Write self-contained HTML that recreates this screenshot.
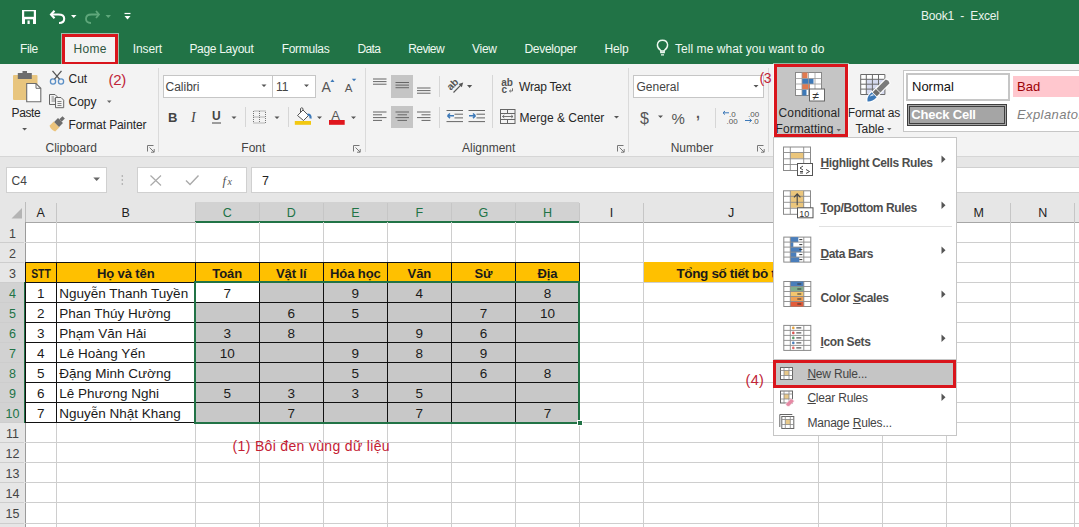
<!DOCTYPE html><html><head><meta charset="utf-8"><title>Excel</title><style>
*{margin:0;padding:0;box-sizing:border-box}
html,body{width:1079px;height:527px;overflow:hidden;background:#fff;font-family:"Liberation Sans",sans-serif}
.a{position:absolute}
.t{position:absolute;white-space:pre;line-height:1}
svg{position:absolute;overflow:visible}
</style></head><body>
<div class="a" style="left:0;top:0;width:1079px;height:64px;background:#217346"></div>
<svg style="left:0;top:0" width="140" height="32">
<rect x="22" y="10" width="14" height="14" fill="#fff"/>
<rect x="24.2" y="11.3" width="9.6" height="5.5" fill="#217346"/>
<rect x="25" y="19.3" width="8" height="4.7" fill="#217346"/>
<rect x="27.5" y="20.5" width="2.2" height="3.5" fill="#fff"/>
<path d="M54.5 10.8 L51 14.5 L54.5 18.2" fill="none" stroke="#fff" stroke-width="2.1"/>
<path d="M51.5 14.5 H58.5 Q64.2 14.5 64.2 18.8 Q64.2 23 59 23" fill="none" stroke="#fff" stroke-width="2.1"/>
<path d="M71 15 L76.5 15 L73.75 18 Z" fill="#fff"/>
<path d="M96 11 L99 14.5 L96 18" fill="none" stroke="#5fa77b" stroke-width="1.8"/>
<path d="M98.5 14.5 H91.5 Q86 14.5 86 18.8 Q86 23 91 23" fill="none" stroke="#5fa77b" stroke-width="1.8"/>
<path d="M105.5 15 L111 15 L108.25 18 Z" fill="#5fa77b"/>
<path d="M124.5 13.5 H130.5" stroke="#fff" stroke-width="1.2"/>
<path d="M124.5 16 L130.5 16 L127.5 19.5 Z" fill="#fff"/>
</svg>
<div class="t" style="left:921px;top:10px;font-size:12px;color:#eaf3ed;letter-spacing:-0.2px">Book1  -  Excel</div>
<div class="a" style="left:62px;top:34px;width:56px;height:30px;background:#f3f3f3"></div>
<div class="t" style="left:20px;top:43px;font-size:12px;color:#eef9f1;letter-spacing:-0.37px">File</div>
<div class="t" style="left:73.4px;top:43px;font-size:12px;color:#2f5640;letter-spacing:0.33px">Home</div>
<div class="t" style="left:132.8px;top:43px;font-size:12px;color:#eef9f1;letter-spacing:-0.12px">Insert</div>
<div class="t" style="left:189.4px;top:43px;font-size:12px;color:#eef9f1;letter-spacing:-0.30px">Page Layout</div>
<div class="t" style="left:281.7px;top:43px;font-size:12px;color:#eef9f1;letter-spacing:-0.29px">Formulas</div>
<div class="t" style="left:357.4px;top:43px;font-size:12px;color:#eef9f1;letter-spacing:-0.60px">Data</div>
<div class="t" style="left:408.3px;top:43px;font-size:12px;color:#eef9f1;letter-spacing:-0.62px">Review</div>
<div class="t" style="left:471.9px;top:43px;font-size:12px;color:#eef9f1;letter-spacing:-0.23px">View</div>
<div class="t" style="left:524.4px;top:43px;font-size:12px;color:#eef9f1;letter-spacing:-0.26px">Developer</div>
<div class="t" style="left:604.5px;top:43px;font-size:12px;color:#eef9f1;letter-spacing:-0.13px">Help</div>
<svg style="left:655px;top:39px" width="16" height="20"><path d="M5.8 13.5 V11.5 Q2.2 9 2.4 5.8 Q2.8 1.2 7.5 1.2 Q12.2 1.2 12.6 5.8 Q12.8 9 9.2 11.5 V13.5 Z" fill="none" stroke="#ecf8ef" stroke-width="1.4"/><path d="M6 15.8 H9 M5.8 12 H9.2" stroke="#ecf8ef" stroke-width="1.3"/></svg>
<div class="t" style="left:675px;top:43px;font-size:12px;color:#eef9f1;letter-spacing:0.05px">Tell me what you want to do</div>
<div class="a" style="left:62px;top:34px;width:56px;height:30.5px;border:3px solid #d9151c;box-shadow:0 0 0 1px rgba(255,255,255,0.55)"></div>
<div class="a" style="left:0;top:64px;width:1079px;height:92px;background:#f3f3f3"></div>
<div class="a" style="left:0;top:156px;width:1079px;height:1px;background:#d6d6d6"></div>
<div class="a" style="left:157.5px;top:68px;width:1px;height:84px;background:#dadada"></div>
<div class="a" style="left:364.5px;top:68px;width:1px;height:84px;background:#dadada"></div>
<div class="a" style="left:628px;top:68px;width:1px;height:84px;background:#dadada"></div>
<div class="a" style="left:768px;top:68px;width:1px;height:84px;background:#dadada"></div>
<div class="t" style="left:45.5px;top:142px;font-size:12px;color:#444">Clipboard</div>
<div class="t" style="left:241.3px;top:142px;font-size:12px;color:#444">Font</div>
<div class="t" style="left:462px;top:142px;font-size:12px;color:#444">Alignment</div>
<div class="t" style="left:670.7px;top:142px;font-size:12px;color:#444">Number</div>
<svg style="left:146.5px;top:145px" width="8" height="8"><path d="M0.5 6.5 V0.5 H6.5" fill="none" stroke="#777" stroke-width="1"/><path d="M2.5 2.5 L7 7 M4 7.2 H7.2 V4" fill="none" stroke="#777" stroke-width="1"/></svg>
<svg style="left:353px;top:145px" width="8" height="8"><path d="M0.5 6.5 V0.5 H6.5" fill="none" stroke="#777" stroke-width="1"/><path d="M2.5 2.5 L7 7 M4 7.2 H7.2 V4" fill="none" stroke="#777" stroke-width="1"/></svg>
<svg style="left:617px;top:145px" width="8" height="8"><path d="M0.5 6.5 V0.5 H6.5" fill="none" stroke="#777" stroke-width="1"/><path d="M2.5 2.5 L7 7 M4 7.2 H7.2 V4" fill="none" stroke="#777" stroke-width="1"/></svg>
<svg style="left:757px;top:145px" width="8" height="8"><path d="M0.5 6.5 V0.5 H6.5" fill="none" stroke="#777" stroke-width="1"/><path d="M2.5 2.5 L7 7 M4 7.2 H7.2 V4" fill="none" stroke="#777" stroke-width="1"/></svg>
<svg style="left:0;top:64px" width="160" height="70">
<rect x="13" y="11" width="24.5" height="25" rx="1" fill="#e8c57e"/>
<rect x="17.8" y="9" width="14" height="6" fill="#6d6d6d"/>
<rect x="22.5" y="7" width="4.5" height="3" fill="#6d6d6d"/>
<path d="M26.7 19.5 H36 L40.8 24.3 V37.8 H26.7 Z" fill="#fff" stroke="#6d6d6d" stroke-width="1.1"/>
<path d="M36 19.5 V24.3 H40.8" fill="none" stroke="#6d6d6d" stroke-width="1"/>
<circle cx="53" cy="17.5" r="2.6" fill="none" stroke="#5b8fc6" stroke-width="1.3"/>
<circle cx="61" cy="17.5" r="2.6" fill="none" stroke="#5b8fc6" stroke-width="1.3"/>
<path d="M54.5 15.2 L61.5 6.8 M59.5 15.2 L52.5 6.8" stroke="#555" stroke-width="1.3"/>
<path d="M49.5 30.5 H55 L57.5 33 V40.5 H49.5 Z" fill="#f3f3f3" stroke="#666" stroke-width="1"/>
<path d="M51.5 33 H54 M51.5 35 H55.5 M51.5 37 H55.5" stroke="#666" stroke-width="0.8"/>
<path d="M55.5 33.5 H61 L63.7 36.2 V43.7 H55.5 Z" fill="#f3f3f3" stroke="#666" stroke-width="1"/>
<path d="M57.5 37.5 H61.5 M57.5 39.5 H61.5 M57.5 41.5 H61.5" stroke="#666" stroke-width="0.8"/>
<g transform="rotate(-45 58 59)">
<path d="M50 55 H56 V63 H50 Q48 59 50 55 Z" fill="#ecc47c"/>
<rect x="56" y="55.5" width="5.5" height="7" fill="#6d6d6d"/>
<rect x="61.5" y="57.3" width="4.5" height="3.4" fill="#6d6d6d"/>
</g>
<path d="M22.2 64 H27 L24.6 66.5 Z" fill="#555"/>
<path d="M107 36.5 H111.5 L109.25 39 Z" fill="#666"/>
</svg>
<div class="t" style="left:11.6px;top:107px;font-size:12px;color:#262626;letter-spacing:-0.4px">Paste</div>
<div class="t" style="left:68.5px;top:73px;font-size:12px;color:#262626">Cut</div>
<div class="t" style="left:68.5px;top:96px;font-size:12px;color:#262626">Copy</div>
<div class="t" style="left:68.5px;top:119px;font-size:12px;color:#262626;letter-spacing:-0.1px">Format Painter</div>
<div class="t" style="left:108.5px;top:71.5px;font-size:15px;color:#c02438;letter-spacing:-0.3px">(2)</div>
<div class="a" style="left:162.5px;top:75px;width:110px;height:22.5px;background:#fff;border:1px solid #c6c6c6"></div>
<div class="a" style="left:271.5px;top:75px;width:44px;height:22.5px;background:#fff;border:1px solid #c6c6c6"></div>
<div class="t" style="left:165.5px;top:81px;font-size:12px;color:#444">Calibri</div>
<div class="t" style="left:276px;top:81px;font-size:12px;color:#444">11</div>
<svg style="left:150px;top:64px" width="220" height="70">
<path d="M111.5 20.5 H116.5 L114 23 Z M154 20.5 H159 L156.5 23 Z" fill="#555"/>
<text x="171.5" y="27.7" font-family="Liberation Sans" font-size="14" fill="#555">A</text>
<path d="M180.4 18 L184.5 18 L182.45 15.3 Z" fill="#3d79b8"/>
<text x="194.7" y="27.7" font-family="Liberation Sans" font-size="11.5" fill="#555">A</text>
<path d="M201.8 14.7 L206.3 14.7 L204.05 17.3 Z" fill="#3d79b8"/>
<text x="18" y="57.5" font-family="Liberation Sans" font-weight="bold" font-size="13" fill="#444">B</text>
<text x="41" y="57.5" font-family="Liberation Serif" font-style="italic" font-size="14" fill="#444">I</text>
<text x="62" y="56" font-family="Liberation Sans" font-weight="bold" font-size="12" fill="#444">U</text>
<path d="M62 59 H71" stroke="#444" stroke-width="1"/>
<path d="M81.5 52.5 H86.5 L84 55 Z M124.5 52.5 H129.5 L127 55 Z M167 52.5 H172 L169.5 55 Z M201 52.5 H206 L203.5 55 Z" fill="#555"/>
<path d="M103.5 47 V59 H115.5 V47 Z M109.5 47 V59 M103.5 53 H115.5" fill="none" stroke="#777" stroke-width="1" stroke-dasharray="1 1"/>
<rect x="144.8" y="57" width="16.2" height="3.8" fill="#f2c811"/>
<path d="M147.5 51.5 L153 46 L158.5 51.5 L153.5 56.5 Z" fill="#fff" stroke="#555" stroke-width="1"/>
<path d="M150.5 48 V44.5 Q151.8 43 153 44.5 V47" fill="none" stroke="#555" stroke-width="1"/>
<path d="M157.5 50.5 Q161 50.5 160.5 54.5" fill="none" stroke="#3d79b8" stroke-width="2.2"/>
<rect x="179" y="56" width="15.7" height="4.8" fill="#e0161d"/>
<text x="181.3" y="55.5" font-family="Liberation Sans" font-size="13" fill="#555">A</text>
</svg>
<div class="a" style="left:244.5px;top:107px;width:1px;height:20px;background:#d6d6d6"></div>
<div class="a" style="left:288px;top:107px;width:1px;height:20px;background:#d6d6d6"></div>
<div class="a" style="left:391px;top:75px;width:22px;height:22.5px;background:#c5c5c5"></div>
<div class="a" style="left:391px;top:105.5px;width:22px;height:22.5px;background:#c5c5c5"></div>
<svg style="left:0;top:0" width="700" height="160"><rect x="373" y="78.5" width="13.5" height="1" fill="#666"/><rect x="373" y="81.1" width="13.5" height="1" fill="#666"/><rect x="373" y="83.7" width="13.5" height="1" fill="#666"/><rect x="395.5" y="82.0" width="13.5" height="1" fill="#666"/><rect x="395.5" y="84.6" width="13.5" height="1" fill="#666"/><rect x="395.5" y="87.2" width="13.5" height="1" fill="#666"/><rect x="417" y="87.5" width="13.5" height="1" fill="#666"/><rect x="417" y="90.1" width="13.5" height="1" fill="#666"/><rect x="417" y="92.7" width="13.5" height="1" fill="#666"/><rect x="373" y="111.5" width="13.5" height="1" fill="#666"/><rect x="373" y="114.3" width="9" height="1" fill="#666"/><rect x="373" y="117.1" width="13.5" height="1" fill="#666"/><rect x="373" y="119.9" width="9" height="1" fill="#666"/><rect x="395.5" y="111.5" width="13.5" height="1" fill="#666"/><rect x="397.5" y="114.3" width="9.5" height="1" fill="#666"/><rect x="395.5" y="117.1" width="13.5" height="1" fill="#666"/><rect x="397.5" y="119.9" width="9.5" height="1" fill="#666"/><rect x="417" y="111.5" width="13.5" height="1" fill="#666"/><rect x="421.5" y="114.3" width="9" height="1" fill="#666"/><rect x="417" y="117.1" width="13.5" height="1" fill="#666"/><rect x="421.5" y="119.9" width="9" height="1" fill="#666"/><rect x="446.5" y="110.0" width="16.5" height="1" fill="#666"/><rect x="454.5" y="113.7" width="8.5" height="1" fill="#666"/><rect x="454.5" y="117.4" width="8.5" height="1" fill="#666"/><rect x="446.5" y="121.1" width="16.5" height="1" fill="#666"/><rect x="468.5" y="110.0" width="16.5" height="1" fill="#666"/><rect x="476.5" y="113.7" width="8.5" height="1" fill="#666"/><rect x="476.5" y="117.4" width="8.5" height="1" fill="#666"/><rect x="468.5" y="121.1" width="16.5" height="1" fill="#666"/>
<path d="M447.5 115.8 H454 M447.5 115.8 L450 113.5 M447.5 115.8 L450 118.1" fill="none" stroke="#3d79b8" stroke-width="1.5"/>
<path d="M469 115.8 H475.5 M475.5 115.8 L473 113.5 M475.5 115.8 L473 118.1" fill="none" stroke="#3d79b8" stroke-width="1.5"/>
<text x="446.5" y="88.5" font-family="Liberation Sans" font-weight="bold" font-size="10" fill="#555" transform="rotate(-45 451.5 84.5)">ab</text>
<path d="M453.5 92.5 L461.5 84.3" fill="none" stroke="#555" stroke-width="1.1"/>
<path d="M463.2 82.6 L458.6 84 L461.8 87.2 Z" fill="#555"/>
<path d="M467 85 H472.2 L469.6 88 Z" fill="#555"/>
<path d="M614 116 H619 L616.5 118.5 Z" fill="#555"/>
<text x="501.3" y="85.8" font-family="Liberation Sans" font-weight="bold" font-size="10" fill="#555">ab</text>
<text x="501.5" y="92.6" font-family="Liberation Sans" font-weight="bold" font-size="10" fill="#555">c</text>
<path d="M512.5 88.3 V91 H509.5 M510.8 89.8 L509.5 91 L510.8 92.2" fill="none" stroke="#666" stroke-width="0.9"/>
<rect x="500.5" y="109.5" width="14.5" height="14" fill="none" stroke="#666" stroke-width="1"/>
<path d="M500.5 113.5 H515 M500.5 119.5 H515 M507.5 109.5 V113.5 M507.5 119.5 V123.5" stroke="#666" stroke-width="1"/>
<path d="M502.5 116.5 H513 M502.5 116.5 L504.3 115 M502.5 116.5 L504.3 118 M513 116.5 L511.2 115 M513 116.5 L511.2 118" fill="none" stroke="#666" stroke-width="0.9"/>
</svg>
<div class="a" style="left:439px;top:75.5px;width:1px;height:21px;background:#d6d6d6"></div>
<div class="a" style="left:439px;top:107px;width:1px;height:21px;background:#d6d6d6"></div>
<div class="a" style="left:492.3px;top:74.5px;width:1px;height:53px;background:#d6d6d6"></div>
<div class="t" style="left:519px;top:81px;font-size:12px;color:#262626;letter-spacing:-0.2px">Wrap Text</div>
<div class="t" style="left:519.6px;top:112px;font-size:12px;color:#262626">Merge &amp; Center</div>
<div class="a" style="left:633px;top:75.3px;width:130.5px;height:22.5px;background:#fff;border:1px solid #c6c6c6"></div>
<div class="t" style="left:636.5px;top:81px;font-size:12px;color:#444">General</div>
<svg style="left:0;top:0" width="780" height="160">
<path d="M753.5 85 H758.5 L756 87.5 Z M658 115.5 H663 L660.5 118 Z" fill="#555"/>
<text x="640" y="124" font-family="Liberation Sans" font-size="16" fill="#555">$</text>
<text x="671.5" y="124" font-family="Liberation Sans" font-size="15" fill="#555">%</text>
<text x="696" y="118" font-family="Liberation Sans" font-weight="bold" font-size="14" fill="#555">,</text>
<text x="729" y="117" font-family="Liberation Sans" font-size="8" fill="#555">.0</text>
<text x="726.5" y="124" font-family="Liberation Sans" font-size="8" fill="#555">.00</text>
<path d="M723 112.8 H729 M723 112.8 L725 111 M723 112.8 L725 114.6" fill="none" stroke="#3d79b8" stroke-width="1"/>
<text x="748" y="117" font-family="Liberation Sans" font-size="8" fill="#555">.00</text>
<text x="752" y="124" font-family="Liberation Sans" font-size="8" fill="#555">.0</text>
<path d="M745 120.5 H751.5 M751.5 120.5 L749.5 118.7 M751.5 120.5 L749.5 122.3" fill="none" stroke="#3d79b8" stroke-width="1"/>
</svg>
<div class="a" style="left:715.3px;top:107.7px;width:1px;height:20px;background:#d6d6d6"></div>
<div class="t" style="left:759.5px;top:70.5px;font-size:14px;color:#c02438;letter-spacing:-0.5px">(3</div>
<svg style="left:0;top:0" width="1079" height="160">
<g transform="translate(860.2,74)">
<rect x="0.5" y="0.5" width="24.2" height="20" fill="#fff"/>
<rect x="6.1" y="5.3" width="18.6" height="15.2" fill="#d5d9ee"/>
<path d="M0.5 0.5 H24.7 V20.5 H0.5 Z M0.5 5.3 H24.7 M0.5 10.2 H24.7 M0.5 15.1 H24.7 M6.1 0.5 V20.5 M12.2 0.5 V20.5 M18.3 0.5 V20.5" stroke="#6a6a6a" stroke-width="1" fill="none"/>
</g>
<g transform="translate(867.5,101.5) rotate(-45)">
<path d="M0 0 Q2.5 -4 9.5 -3.6 L9.5 3.4 Q3 3.6 0 0 Z M10.3 -2.9 H14.8 V2.9 H10.3 Z M15.5 -2.7 H28.5 L29.5 0 L28.5 2.7 H15.5 Z" fill="#fff" stroke="#fff" stroke-width="2.2" stroke-linejoin="round"/>
<path d="M0 0 Q2.5 -4 9.5 -3.6 L9.5 3.4 Q3 3.6 0 0 Z" fill="#3d79b8"/>
<path d="M5 -2.2 Q7.5 -2.6 9 -1.5 L9 0.2 Q7 -0.8 5 -2.2 Z" fill="#ffffff" opacity="0.75"/>
<rect x="10.3" y="-2.9" width="4.5" height="5.8" fill="#6d6d6d"/>
<path d="M15.5 -2.7 H28.5 L29.5 0 L28.5 2.7 H15.5 Z" fill="#7b7b7b"/>
</g>
<path d="M887 128 H891.5 L889.25 130.5 Z" fill="#666"/>
</svg>
<div class="t" style="left:847.8px;top:107px;font-size:12px;color:#262626;letter-spacing:-0.2px">Format as</div>
<div class="t" style="left:855.5px;top:122.5px;font-size:12px;color:#262626">Table</div>
<div class="a" style="left:903px;top:70px;width:200px;height:62px;background:#fff;border:1px solid #c6c6c6"></div>
<div class="a" style="left:906px;top:73.3px;width:103.5px;height:27.5px;background:#fff;border:2px solid #c6c6c6"></div>
<div class="t" style="left:912px;top:79.5px;font-size:13px;color:#111">Normal</div>
<div class="a" style="left:1012.8px;top:76.2px;width:80px;height:21px;background:#ffc7ce"></div>
<div class="t" style="left:1017px;top:79.5px;font-size:13px;color:#9c0006">Bad</div>
<div class="a" style="left:907px;top:104px;width:99.6px;height:22px;background:#a5a5a5;border:1px solid #3f3f3f;box-shadow:inset 0 0 0 1px #a5a5a5, inset 0 0 0 2px #3f3f3f"></div>
<div class="t" style="left:911.3px;top:108px;font-size:13px;color:#fff;font-weight:bold;letter-spacing:-0.2px">Check Cell</div>
<div class="t" style="left:1017px;top:108px;font-size:13px;color:#7f7f7f;font-style:italic;letter-spacing:0.4px">Explanatory</div>
<div class="a" style="left:774px;top:64px;width:74px;height:73px;background:#c5c5c5"></div>
<svg style="left:0;top:0" width="1079" height="160">
<g transform="translate(795,72)">
<rect x="0.5" y="0.5" width="26" height="23" fill="#fff" stroke="#888" stroke-width="1"/>
<rect x="7" y="0.5" width="5.5" height="6" fill="#e07a4f"/>
<rect x="7" y="6.5" width="11.5" height="5.5" fill="#3d79b8"/>
<rect x="7" y="12" width="8" height="5.5" fill="#e07a4f"/>
<rect x="7" y="17.5" width="4.5" height="6" fill="#3d79b8"/>
<path d="M0.5 6.5 H26.5 M0.5 12 H26.5 M0.5 17.5 H26.5 M7 0.5 V23.5 M13.5 0.5 V23.5 M20 0.5 V23.5" stroke="#999" stroke-width="0.8" fill="none"/>
<rect x="14.5" y="17" width="15" height="12" fill="#fff" stroke="#666" stroke-width="1"/>
<text x="17.5" y="27.5" font-family="Liberation Sans" font-size="12" fill="#333">&#8800;</text>
</g>
<path d="M836.5 129 H841 L838.75 131.5 Z" fill="#666"/>
</svg>
<div class="t" style="left:778.5px;top:107px;font-size:12px;color:#262626;letter-spacing:0.15px">Conditional</div>
<div class="t" style="left:775.6px;top:122.5px;font-size:12px;color:#262626;letter-spacing:0.05px">Formatting</div>
<div class="a" style="left:773.5px;top:63.5px;width:74.5px;height:73.5px;border:3px solid #d9151c;box-shadow:0 0 0 1px rgba(255,255,255,0.5)"></div>
<div class="a" style="left:0;top:157px;width:1079px;height:65px;background:#e6e6e6"></div>
<div class="a" style="left:5.7px;top:167.2px;width:101px;height:25.8px;background:#fff;border:1px solid #d0d0d0"></div>
<div class="t" style="left:11.5px;top:174.8px;font-size:12px;color:#444">C4</div>
<div class="a" style="left:137.4px;top:167.2px;width:109.2px;height:25.8px;background:#fff;border:1px solid #d0d0d0"></div>
<div class="a" style="left:250.6px;top:167.2px;width:840px;height:25.8px;background:#fff;border:1px solid #d0d0d0"></div>
<div class="t" style="left:262px;top:175px;font-size:12.5px;color:#222">7</div>
<svg style="left:0;top:0" width="300" height="222">
<path d="M93.3 177.5 H100 L96.65 181 Z" fill="#666"/>
<circle cx="122.3" cy="176" r="0.8" fill="#999"/><circle cx="122.3" cy="180" r="0.8" fill="#999"/><circle cx="122.3" cy="184" r="0.8" fill="#999"/>
<path d="M150.5 175.5 L161 185.5 M161 175.5 L150.5 185.5" stroke="#aaa" stroke-width="1.2"/>
<path d="M186 180.5 L190 184.5 L198.5 175.5" fill="none" stroke="#aaa" stroke-width="1.4"/>
<text x="222.5" y="185" font-family="Liberation Serif" font-style="italic" font-size="13" fill="#555">f</text>
<text x="227.5" y="185" font-family="Liberation Serif" font-style="italic" font-size="10" fill="#555">x</text>
</svg>
<div class="a" style="left:0;top:202px;width:1079px;height:20px;background:#e6e6e6"></div>
<div class="a" style="left:195.2px;top:202px;width:384.3px;height:20px;background:#d2d2d2"></div>
<div class="a" style="left:56px;top:203px;width:1px;height:19px;background:#c6c6c6"></div>
<div class="a" style="left:195px;top:203px;width:1px;height:19px;background:#c6c6c6"></div>
<div class="a" style="left:259px;top:203px;width:1px;height:19px;background:#c6c6c6"></div>
<div class="a" style="left:323px;top:203px;width:1px;height:19px;background:#c6c6c6"></div>
<div class="a" style="left:387px;top:203px;width:1px;height:19px;background:#c6c6c6"></div>
<div class="a" style="left:451px;top:203px;width:1px;height:19px;background:#c6c6c6"></div>
<div class="a" style="left:515px;top:203px;width:1px;height:19px;background:#c6c6c6"></div>
<div class="a" style="left:579px;top:203px;width:1px;height:19px;background:#c6c6c6"></div>
<div class="a" style="left:643px;top:203px;width:1px;height:19px;background:#c6c6c6"></div>
<div class="a" style="left:818px;top:203px;width:1px;height:19px;background:#c6c6c6"></div>
<div class="a" style="left:882px;top:203px;width:1px;height:19px;background:#c6c6c6"></div>
<div class="a" style="left:946px;top:203px;width:1px;height:19px;background:#c6c6c6"></div>
<div class="a" style="left:1010px;top:203px;width:1px;height:19px;background:#c6c6c6"></div>
<div class="a" style="left:1074px;top:203px;width:1px;height:19px;background:#c6c6c6"></div>
<div class="a" style="left:24.5px;top:202px;width:1px;height:20px;background:#bdbdbd"></div>
<div class="a" style="left:0;top:222px;width:1079px;height:1px;background:#a6a6a6"></div>
<div class="a" style="left:195.2px;top:220.5px;width:384.3px;height:2px;background:#217346"></div>
<svg style="left:0;top:0" width="30" height="222"><path d="M22 208 V218.5 H11.5 Z" fill="#b4b4b4"/></svg>
<div class="t" style="left:20.65px;width:40px;text-align:center;top:207px;font-size:12.5px;color:#222">A</div>
<div class="t" style="left:105.75px;width:40px;text-align:center;top:207px;font-size:12.5px;color:#222">B</div>
<div class="t" style="left:207.225px;width:40px;text-align:center;top:207px;font-size:12.5px;color:#217346">C</div>
<div class="t" style="left:271.275px;width:40px;text-align:center;top:207px;font-size:12.5px;color:#217346">D</div>
<div class="t" style="left:335.32500000000005px;width:40px;text-align:center;top:207px;font-size:12.5px;color:#217346">E</div>
<div class="t" style="left:399.375px;width:40px;text-align:center;top:207px;font-size:12.5px;color:#217346">F</div>
<div class="t" style="left:463.42500000000007px;width:40px;text-align:center;top:207px;font-size:12.5px;color:#217346">G</div>
<div class="t" style="left:527.475px;width:40px;text-align:center;top:207px;font-size:12.5px;color:#217346">H</div>
<div class="t" style="left:591.525px;width:40px;text-align:center;top:207px;font-size:12.5px;color:#222">I</div>
<div class="t" style="left:711.05px;width:40px;text-align:center;top:207px;font-size:12.5px;color:#222">J</div>
<div class="t" style="left:958.6749999999998px;width:40px;text-align:center;top:207px;font-size:12.5px;color:#222">M</div>
<div class="t" style="left:1022.7249999999999px;width:40px;text-align:center;top:207px;font-size:12.5px;color:#222">N</div>
<div class="a" style="left:0;top:222px;width:25px;height:305px;background:#e6e6e6"></div>
<div class="a" style="left:0;top:282.21px;width:25px;height:140.49px;background:#d2d2d2"></div>
<div class="a" style="left:24.5px;top:222px;width:1px;height:305px;background:#9b9b9b"></div>
<div class="a" style="left:23.5px;top:282.21px;width:2px;height:140.49px;background:#217346"></div>
<div class="a" style="left:0;top:242px;width:24px;height:1px;background:#cdcdcd"></div>
<div class="t" style="left:0;width:25px;text-align:center;top:227.5px;font-size:12.5px;color:#444">1</div>
<div class="a" style="left:0;top:262px;width:24px;height:1px;background:#cdcdcd"></div>
<div class="t" style="left:0;width:25px;text-align:center;top:247.57px;font-size:12.5px;color:#444">2</div>
<div class="a" style="left:0;top:282px;width:24px;height:1px;background:#cdcdcd"></div>
<div class="t" style="left:0;width:25px;text-align:center;top:267.64px;font-size:12.5px;color:#444">3</div>
<div class="a" style="left:0;top:302px;width:24px;height:1px;background:#cdcdcd"></div>
<div class="t" style="left:0;width:25px;text-align:center;top:287.71px;font-size:12.5px;color:#217346">4</div>
<div class="a" style="left:0;top:322px;width:24px;height:1px;background:#cdcdcd"></div>
<div class="t" style="left:0;width:25px;text-align:center;top:307.78px;font-size:12.5px;color:#217346">5</div>
<div class="a" style="left:0;top:342px;width:24px;height:1px;background:#cdcdcd"></div>
<div class="t" style="left:0;width:25px;text-align:center;top:327.85px;font-size:12.5px;color:#217346">6</div>
<div class="a" style="left:0;top:362px;width:24px;height:1px;background:#cdcdcd"></div>
<div class="t" style="left:0;width:25px;text-align:center;top:347.92px;font-size:12.5px;color:#217346">7</div>
<div class="a" style="left:0;top:382px;width:24px;height:1px;background:#cdcdcd"></div>
<div class="t" style="left:0;width:25px;text-align:center;top:367.99px;font-size:12.5px;color:#217346">8</div>
<div class="a" style="left:0;top:402px;width:24px;height:1px;background:#cdcdcd"></div>
<div class="t" style="left:0;width:25px;text-align:center;top:388.06px;font-size:12.5px;color:#217346">9</div>
<div class="a" style="left:0;top:422px;width:24px;height:1px;background:#cdcdcd"></div>
<div class="t" style="left:0;width:25px;text-align:center;top:408.13px;font-size:12.5px;color:#217346">10</div>
<div class="a" style="left:0;top:442px;width:24px;height:1px;background:#cdcdcd"></div>
<div class="t" style="left:0;width:25px;text-align:center;top:428.2px;font-size:12.5px;color:#444">11</div>
<div class="a" style="left:0;top:462px;width:24px;height:1px;background:#cdcdcd"></div>
<div class="t" style="left:0;width:25px;text-align:center;top:448.27px;font-size:12.5px;color:#444">12</div>
<div class="a" style="left:0;top:482px;width:24px;height:1px;background:#cdcdcd"></div>
<div class="t" style="left:0;width:25px;text-align:center;top:468.34000000000003px;font-size:12.5px;color:#444">13</div>
<div class="a" style="left:0;top:502px;width:24px;height:1px;background:#cdcdcd"></div>
<div class="t" style="left:0;width:25px;text-align:center;top:488.41px;font-size:12.5px;color:#444">14</div>
<div class="a" style="left:0;top:523px;width:24px;height:1px;background:#cdcdcd"></div>
<div class="t" style="left:0;width:25px;text-align:center;top:508.48px;font-size:12.5px;color:#444">15</div>
<div class="a" style="left:0;top:543px;width:24px;height:1px;background:#cdcdcd"></div>
<div class="t" style="left:0;width:25px;text-align:center;top:528.55px;font-size:12.5px;color:#444">16</div>
<div class="a" style="left:25px;top:242px;width:1054px;height:1px;background:#cecece"></div>
<div class="a" style="left:25px;top:262px;width:1054px;height:1px;background:#cecece"></div>
<div class="a" style="left:25px;top:282px;width:1054px;height:1px;background:#cecece"></div>
<div class="a" style="left:25px;top:302px;width:1054px;height:1px;background:#cecece"></div>
<div class="a" style="left:25px;top:322px;width:1054px;height:1px;background:#cecece"></div>
<div class="a" style="left:25px;top:342px;width:1054px;height:1px;background:#cecece"></div>
<div class="a" style="left:25px;top:362px;width:1054px;height:1px;background:#cecece"></div>
<div class="a" style="left:25px;top:382px;width:1054px;height:1px;background:#cecece"></div>
<div class="a" style="left:25px;top:402px;width:1054px;height:1px;background:#cecece"></div>
<div class="a" style="left:25px;top:422px;width:1054px;height:1px;background:#cecece"></div>
<div class="a" style="left:25px;top:442px;width:1054px;height:1px;background:#cecece"></div>
<div class="a" style="left:25px;top:462px;width:1054px;height:1px;background:#cecece"></div>
<div class="a" style="left:25px;top:482px;width:1054px;height:1px;background:#cecece"></div>
<div class="a" style="left:25px;top:502px;width:1054px;height:1px;background:#cecece"></div>
<div class="a" style="left:25px;top:523px;width:1054px;height:1px;background:#cecece"></div>
<div class="a" style="left:25px;top:543px;width:1054px;height:1px;background:#cecece"></div>
<div class="a" style="left:56px;top:222px;width:1px;height:305px;background:#cecece"></div>
<div class="a" style="left:195px;top:222px;width:1px;height:305px;background:#cecece"></div>
<div class="a" style="left:259px;top:222px;width:1px;height:305px;background:#cecece"></div>
<div class="a" style="left:323px;top:222px;width:1px;height:305px;background:#cecece"></div>
<div class="a" style="left:387px;top:222px;width:1px;height:305px;background:#cecece"></div>
<div class="a" style="left:451px;top:222px;width:1px;height:305px;background:#cecece"></div>
<div class="a" style="left:515px;top:222px;width:1px;height:305px;background:#cecece"></div>
<div class="a" style="left:579px;top:222px;width:1px;height:305px;background:#cecece"></div>
<div class="a" style="left:643px;top:222px;width:1px;height:305px;background:#cecece"></div>
<div class="a" style="left:818px;top:222px;width:1px;height:305px;background:#cecece"></div>
<div class="a" style="left:882px;top:222px;width:1px;height:305px;background:#cecece"></div>
<div class="a" style="left:946px;top:222px;width:1px;height:305px;background:#cecece"></div>
<div class="a" style="left:1010px;top:222px;width:1px;height:305px;background:#cecece"></div>
<div class="a" style="left:1074px;top:222px;width:1px;height:305px;background:#cecece"></div>
<div class="a" style="left:25.0px;top:262.14px;width:554.5px;height:20.07px;background:#ffc000"></div>
<div class="a" style="left:643.55px;top:262.14px;width:200px;height:20.07px;background:#ffc000"></div>
<div class="a" style="left:195.2px;top:282.21px;width:384.3px;height:140.49px;background:#c8c8c8"></div>
<div class="a" style="left:195.2px;top:282.21px;width:64.05000000000001px;height:20.07px;background:#fff"></div>
<div class="a" style="left:25px;top:262px;width:555px;height:1px;background:#111"></div>
<div class="a" style="left:25px;top:282px;width:555px;height:1px;background:#111"></div>
<div class="a" style="left:25px;top:302px;width:555px;height:1px;background:#111"></div>
<div class="a" style="left:25px;top:322px;width:555px;height:1px;background:#111"></div>
<div class="a" style="left:25px;top:342px;width:555px;height:1px;background:#111"></div>
<div class="a" style="left:25px;top:362px;width:555px;height:1px;background:#111"></div>
<div class="a" style="left:25px;top:382px;width:555px;height:1px;background:#111"></div>
<div class="a" style="left:25px;top:402px;width:555px;height:1px;background:#111"></div>
<div class="a" style="left:25px;top:422px;width:555px;height:1px;background:#111"></div>
<div class="a" style="left:25px;top:262px;width:1px;height:161px;background:#111"></div>
<div class="a" style="left:56px;top:262px;width:1px;height:161px;background:#111"></div>
<div class="a" style="left:195px;top:262px;width:1px;height:161px;background:#111"></div>
<div class="a" style="left:259px;top:262px;width:1px;height:161px;background:#111"></div>
<div class="a" style="left:323px;top:262px;width:1px;height:161px;background:#111"></div>
<div class="a" style="left:387px;top:262px;width:1px;height:161px;background:#111"></div>
<div class="a" style="left:451px;top:262px;width:1px;height:161px;background:#111"></div>
<div class="a" style="left:515px;top:262px;width:1px;height:161px;background:#111"></div>
<div class="a" style="left:579px;top:262px;width:1px;height:161px;background:#111"></div>
<div class="t" style="left:0.6499999999999986px;width:80px;text-align:center;top:266.64px;font-size:13px;font-weight:bold;color:#1a1a1a;transform:scaleX(0.8)">STT</div>
<div class="t" style="left:85.75px;width:80px;text-align:center;top:266.64px;font-size:13px;font-weight:bold;color:#1a1a1a;letter-spacing:-0.1px">Họ và tên</div>
<div class="t" style="left:187.225px;width:80px;text-align:center;top:266.64px;font-size:13px;font-weight:bold;color:#1a1a1a;letter-spacing:-0.1px">Toán</div>
<div class="t" style="left:251.27499999999998px;width:80px;text-align:center;top:266.64px;font-size:13px;font-weight:bold;color:#1a1a1a;letter-spacing:-0.1px">Vật lí</div>
<div class="t" style="left:315.32500000000005px;width:80px;text-align:center;top:266.64px;font-size:13px;font-weight:bold;color:#1a1a1a;letter-spacing:-0.1px">Hóa học</div>
<div class="t" style="left:379.375px;width:80px;text-align:center;top:266.64px;font-size:13px;font-weight:bold;color:#1a1a1a;letter-spacing:-0.1px">Văn</div>
<div class="t" style="left:443.42500000000007px;width:80px;text-align:center;top:266.64px;font-size:13px;font-weight:bold;color:#1a1a1a;letter-spacing:-0.1px">Sử</div>
<div class="t" style="left:507.475px;width:80px;text-align:center;top:266.64px;font-size:13px;font-weight:bold;color:#1a1a1a;letter-spacing:-0.1px">Địa</div>
<div class="t" style="left:20.65px;width:40px;text-align:center;top:286.71px;font-size:13.5px;color:#1a1a1a">1</div>
<div class="t" style="left:59.3px;top:286.71px;font-size:13.5px;color:#1a1a1a">Nguyễn Thanh Tuyền</div>
<div class="t" style="left:207.225px;width:40px;text-align:center;top:286.71px;font-size:13.5px;color:#1a1a1a">7</div>
<div class="t" style="left:335.32500000000005px;width:40px;text-align:center;top:286.71px;font-size:13.5px;color:#1a1a1a">9</div>
<div class="t" style="left:399.375px;width:40px;text-align:center;top:286.71px;font-size:13.5px;color:#1a1a1a">4</div>
<div class="t" style="left:527.475px;width:40px;text-align:center;top:286.71px;font-size:13.5px;color:#1a1a1a">8</div>
<div class="t" style="left:20.65px;width:40px;text-align:center;top:306.78px;font-size:13.5px;color:#1a1a1a">2</div>
<div class="t" style="left:59.3px;top:306.78px;font-size:13.5px;color:#1a1a1a">Phan Thúy Hường</div>
<div class="t" style="left:271.275px;width:40px;text-align:center;top:306.78px;font-size:13.5px;color:#1a1a1a">6</div>
<div class="t" style="left:335.32500000000005px;width:40px;text-align:center;top:306.78px;font-size:13.5px;color:#1a1a1a">5</div>
<div class="t" style="left:463.42500000000007px;width:40px;text-align:center;top:306.78px;font-size:13.5px;color:#1a1a1a">7</div>
<div class="t" style="left:527.475px;width:40px;text-align:center;top:306.78px;font-size:13.5px;color:#1a1a1a">10</div>
<div class="t" style="left:20.65px;width:40px;text-align:center;top:326.85px;font-size:13.5px;color:#1a1a1a">3</div>
<div class="t" style="left:59.3px;top:326.85px;font-size:13.5px;color:#1a1a1a">Phạm Văn Hải</div>
<div class="t" style="left:207.225px;width:40px;text-align:center;top:326.85px;font-size:13.5px;color:#1a1a1a">3</div>
<div class="t" style="left:271.275px;width:40px;text-align:center;top:326.85px;font-size:13.5px;color:#1a1a1a">8</div>
<div class="t" style="left:399.375px;width:40px;text-align:center;top:326.85px;font-size:13.5px;color:#1a1a1a">9</div>
<div class="t" style="left:463.42500000000007px;width:40px;text-align:center;top:326.85px;font-size:13.5px;color:#1a1a1a">6</div>
<div class="t" style="left:20.65px;width:40px;text-align:center;top:346.92px;font-size:13.5px;color:#1a1a1a">4</div>
<div class="t" style="left:59.3px;top:346.92px;font-size:13.5px;color:#1a1a1a">Lê Hoàng Yến</div>
<div class="t" style="left:207.225px;width:40px;text-align:center;top:346.92px;font-size:13.5px;color:#1a1a1a">10</div>
<div class="t" style="left:335.32500000000005px;width:40px;text-align:center;top:346.92px;font-size:13.5px;color:#1a1a1a">9</div>
<div class="t" style="left:399.375px;width:40px;text-align:center;top:346.92px;font-size:13.5px;color:#1a1a1a">8</div>
<div class="t" style="left:463.42500000000007px;width:40px;text-align:center;top:346.92px;font-size:13.5px;color:#1a1a1a">9</div>
<div class="t" style="left:20.65px;width:40px;text-align:center;top:366.99px;font-size:13.5px;color:#1a1a1a">5</div>
<div class="t" style="left:59.3px;top:366.99px;font-size:13.5px;color:#1a1a1a">Đặng Minh Cường</div>
<div class="t" style="left:335.32500000000005px;width:40px;text-align:center;top:366.99px;font-size:13.5px;color:#1a1a1a">5</div>
<div class="t" style="left:463.42500000000007px;width:40px;text-align:center;top:366.99px;font-size:13.5px;color:#1a1a1a">6</div>
<div class="t" style="left:527.475px;width:40px;text-align:center;top:366.99px;font-size:13.5px;color:#1a1a1a">8</div>
<div class="t" style="left:20.65px;width:40px;text-align:center;top:387.06px;font-size:13.5px;color:#1a1a1a">6</div>
<div class="t" style="left:59.3px;top:387.06px;font-size:13.5px;color:#1a1a1a">Lê Phương Nghi</div>
<div class="t" style="left:207.225px;width:40px;text-align:center;top:387.06px;font-size:13.5px;color:#1a1a1a">5</div>
<div class="t" style="left:271.275px;width:40px;text-align:center;top:387.06px;font-size:13.5px;color:#1a1a1a">3</div>
<div class="t" style="left:335.32500000000005px;width:40px;text-align:center;top:387.06px;font-size:13.5px;color:#1a1a1a">3</div>
<div class="t" style="left:399.375px;width:40px;text-align:center;top:387.06px;font-size:13.5px;color:#1a1a1a">5</div>
<div class="t" style="left:20.65px;width:40px;text-align:center;top:407.13px;font-size:13.5px;color:#1a1a1a">7</div>
<div class="t" style="left:59.3px;top:407.13px;font-size:13.5px;color:#1a1a1a">Nguyễn Nhật Khang</div>
<div class="t" style="left:271.275px;width:40px;text-align:center;top:407.13px;font-size:13.5px;color:#1a1a1a">7</div>
<div class="t" style="left:399.375px;width:40px;text-align:center;top:407.13px;font-size:13.5px;color:#1a1a1a">7</div>
<div class="t" style="left:527.475px;width:40px;text-align:center;top:407.13px;font-size:13.5px;color:#1a1a1a">7</div>
<div class="a" style="left:194.2px;top:281.21px;width:386.3px;height:142.49px;border:2px solid #217346"></div>
<div class="a" style="left:576.5px;top:419.7px;width:6px;height:6px;background:#217346;border:1px solid #fff"></div>
<div class="t" style="left:676.4px;top:266.64px;font-size:13.5px;font-weight:bold;color:#1a1a1a;letter-spacing:-0.35px">Tổng số tiết bỏ tiết</div>
<div class="t" style="left:232.6px;top:438.5px;font-size:14px;color:#c42033;letter-spacing:0.33px">(1) Bôi đen vùng dữ liệu</div>
<div class="a" style="left:773px;top:137px;width:183.8px;height:299px;background:#fff;border:1px solid #c6c6c6"></div>
<div class="a" style="left:819px;top:226px;width:133px;height:1px;background:#e1e1e1"></div>
<div class="a" style="left:774px;top:359px;width:181.5px;height:28px;background:#c5c5c5"></div>
<div class="t" style="left:820.5px;top:156.5px;font-size:12px;font-weight:bold;color:#4d4d4d;letter-spacing:-0.38px"><u>H</u>ighlight Cells Rules</div>
<svg style="left:941px;top:155.0px" width="6" height="10"><path d="M0.5 0.5 L4.5 4.25 L0.5 8 Z" fill="#555"/></svg>
<div class="t" style="left:820.5px;top:202px;font-size:12px;font-weight:bold;color:#4d4d4d;letter-spacing:-0.38px"><u>T</u>op/Bottom Rules</div>
<svg style="left:941px;top:200.5px" width="6" height="10"><path d="M0.5 0.5 L4.5 4.25 L0.5 8 Z" fill="#555"/></svg>
<div class="t" style="left:820.5px;top:247.5px;font-size:12px;font-weight:bold;color:#4d4d4d;letter-spacing:-0.38px"><u>D</u>ata Bars</div>
<svg style="left:941px;top:246.0px" width="6" height="10"><path d="M0.5 0.5 L4.5 4.25 L0.5 8 Z" fill="#555"/></svg>
<div class="t" style="left:820.5px;top:291.5px;font-size:12px;font-weight:bold;color:#4d4d4d;letter-spacing:-0.38px">Color <u>S</u>cales</div>
<svg style="left:941px;top:290.0px" width="6" height="10"><path d="M0.5 0.5 L4.5 4.25 L0.5 8 Z" fill="#555"/></svg>
<div class="t" style="left:820.5px;top:335.5px;font-size:12px;font-weight:bold;color:#4d4d4d;letter-spacing:-0.38px"><u>I</u>con Sets</div>
<svg style="left:941px;top:334.0px" width="6" height="10"><path d="M0.5 0.5 L4.5 4.25 L0.5 8 Z" fill="#555"/></svg>
<div class="t" style="left:807.4px;top:367.5px;font-size:12px;color:#444;letter-spacing:-0.2px"><u>N</u>ew Rule...</div>
<div class="t" style="left:807.4px;top:392px;font-size:12px;color:#444;letter-spacing:-0.2px"><u>C</u>lear Rules</div>
<svg style="left:941px;top:392.5px" width="6" height="10"><path d="M0.5 0.5 L4.5 4.25 L0.5 8 Z" fill="#555"/></svg>
<div class="t" style="left:807.4px;top:416.5px;font-size:12px;color:#444;letter-spacing:-0.2px">Manage <u>R</u>ules...</div>
<div class="a" style="left:773px;top:359.6px;width:183px;height:28.2px;border:3px solid #d9151c"></div>
<div class="t" style="left:745.5px;top:373px;font-size:14.5px;color:#c02438;letter-spacing:0.3px">(4)</div>
<svg style="left:0;top:0" width="1079" height="527"><g transform="translate(783,146.5)"><rect x="0.5" y="0.5" width="27" height="23.5" fill="#fff" stroke="#8a8a8a"/><rect x="7.5" y="6" width="13.5" height="6" fill="#ebc67c"/><path d="M0.5 6 H27.5 M0.5 12.3 H27.5 M0.5 18 H27.5 M7.3 0.5 V24 M20.7 0.5 V24" stroke="#8a8a8a" stroke-width="0.9" fill="none"/><rect x="14.5" y="17" width="15" height="12" fill="#fff" stroke="#555"/><path d="M20 19.5 L17 21.5 L20 23.5 M17 25 H20 M17 26.5 H20 M23 23 L26.5 25 L23 27" fill="none" stroke="#333" stroke-width="0.9"/></g><g transform="translate(783,190.3)"><rect x="0.5" y="0.5" width="27" height="23.5" fill="#fff" stroke="#8a8a8a"/><rect x="7.5" y="0.5" width="13.5" height="17" fill="#ebc67c"/><path d="M0.5 6 H27.5 M0.5 12 H27.5 M0.5 18 H27.5 M7.3 0.5 V24 M20.7 0.5 V24" stroke="#8a8a8a" stroke-width="0.9" fill="none"/><path d="M14.2 15 V3.5 M11 7 L14.2 3.5 L17.4 7" fill="none" stroke="#444" stroke-width="1.1"/><rect x="14.5" y="17.5" width="15.5" height="10" fill="#fff" stroke="#555"/><text x="16.3" y="26.3" font-family="Liberation Sans" font-size="9" fill="#333">10</text></g><g transform="translate(783.3,236.6)"><rect x="0.5" y="0.5" width="27" height="25" fill="#fff" stroke="#8a8a8a"/><rect x="7" y="0.5" width="8" height="5" fill="#4a7ebb"/><rect x="16" y="2.5" width="3" height="1" fill="#333"/><rect x="7" y="5.5" width="3" height="5" fill="#4a7ebb"/><rect x="16" y="7.5" width="3" height="1" fill="#333"/><rect x="7" y="10.5" width="11" height="5" fill="#4a7ebb"/><rect x="16" y="12.5" width="3" height="1" fill="#333"/><rect x="7" y="15.5" width="6" height="5" fill="#4a7ebb"/><rect x="16" y="17.5" width="3" height="1" fill="#333"/><rect x="7" y="20.5" width="9" height="5" fill="#4a7ebb"/><rect x="16" y="22.5" width="3" height="1" fill="#333"/><path d="M0.5 5.5 H27.5 M0.5 10.5 H27.5 M0.5 15.5 H27.5 M0.5 20.5 H27.5 M7 0.5 V25.5 M20.5 0.5 V25.5" stroke="#8a8a8a" stroke-width="0.9" fill="none"/></g><g transform="translate(783.3,281)"><rect x="0.5" y="0.5" width="27" height="25" fill="#fff" stroke="#8a8a8a"/><rect x="7" y="0.5" width="13.5" height="5" fill="#4a7ebb"/><rect x="14" y="2.5" width="4" height="1" fill="#333"/><rect x="7" y="5.5" width="13.5" height="5" fill="#7fae8c"/><rect x="14" y="7.5" width="4" height="1" fill="#333"/><rect x="7" y="10.5" width="13.5" height="5" fill="#f4c66e"/><rect x="14" y="12.5" width="4" height="1" fill="#333"/><rect x="7" y="15.5" width="13.5" height="5" fill="#f0a054"/><rect x="14" y="17.5" width="4" height="1" fill="#333"/><rect x="7" y="20.5" width="13.5" height="5" fill="#e25c3b"/><rect x="14" y="22.5" width="4" height="1" fill="#333"/><path d="M0.5 5.5 H27.5 M0.5 10.5 H27.5 M0.5 15.5 H27.5 M0.5 20.5 H27.5 M7 0.5 V25.5 M20.5 0.5 V25.5" stroke="#8a8a8a" stroke-width="0.9" fill="none"/></g><g transform="translate(783.3,324.9)"><rect x="0.5" y="0.5" width="27" height="25" fill="#fff" stroke="#8a8a8a"/><circle cx="10" cy="3" r="1.3" fill="#e6a23c"/><rect x="13" y="2.5" width="5" height="1" fill="#333"/><circle cx="10" cy="8" r="1.3" fill="#d9534f"/><rect x="13" y="7.5" width="5" height="1" fill="#333"/><circle cx="10" cy="13" r="1.3" fill="#5b9b6b"/><rect x="13" y="12.5" width="5" height="1" fill="#333"/><circle cx="10" cy="18" r="1.3" fill="#4a7ebb"/><rect x="13" y="17.5" width="5" height="1" fill="#333"/><circle cx="10" cy="23" r="1.3" fill="#e06b6b"/><rect x="13" y="22.5" width="5" height="1" fill="#333"/><path d="M0.5 5.5 H27.5 M0.5 10.5 H27.5 M0.5 15.5 H27.5 M0.5 20.5 H27.5 M7 0.5 V25.5 M20.5 0.5 V25.5" stroke="#8a8a8a" stroke-width="0.9" fill="none"/></g><g transform="translate(780,367)"><rect x="0.5" y="0.5" width="12" height="12" fill="#fff" stroke="#666"/><rect x="4" y="3.5" width="5" height="5" fill="#e8c98a"/><path d="M0.5 3.5 H12.5 M0.5 8.5 H12.5 M4 0.5 V12.5 M9 0.5 V12.5" stroke="#888" stroke-width="0.8" fill="none"/></g><g transform="translate(780,390.5)"><rect x="0.5" y="0.5" width="12" height="12" fill="#fff" stroke="#666"/><rect x="4" y="3.5" width="5" height="5" fill="#e8c98a"/><path d="M0.5 3.5 H12.5 M0.5 8.5 H12.5 M4 0.5 V12.5 M9 0.5 V12.5" stroke="#888" stroke-width="0.8" fill="none"/><path d="M5.5 13.5 L11 8 L14.5 10.5 L9 16 Q6.5 16.5 5.5 13.5 Z" fill="#e58aa5" stroke="#fff" stroke-width="0.6"/></g><g transform="translate(779.3,414)"><path d="M0.5 13 V0.5 H13" fill="none" stroke="#666"/><rect x="2.5" y="2.5" width="12" height="12" fill="#fff" stroke="#666"/><rect x="6" y="5.5" width="5" height="5" fill="#e8c98a"/><path d="M2.5 5.5 H14.5 M2.5 10.5 H14.5 M6 2.5 V14.5 M11 2.5 V14.5" stroke="#888" stroke-width="0.8" fill="none"/></g></svg>
</body></html>
